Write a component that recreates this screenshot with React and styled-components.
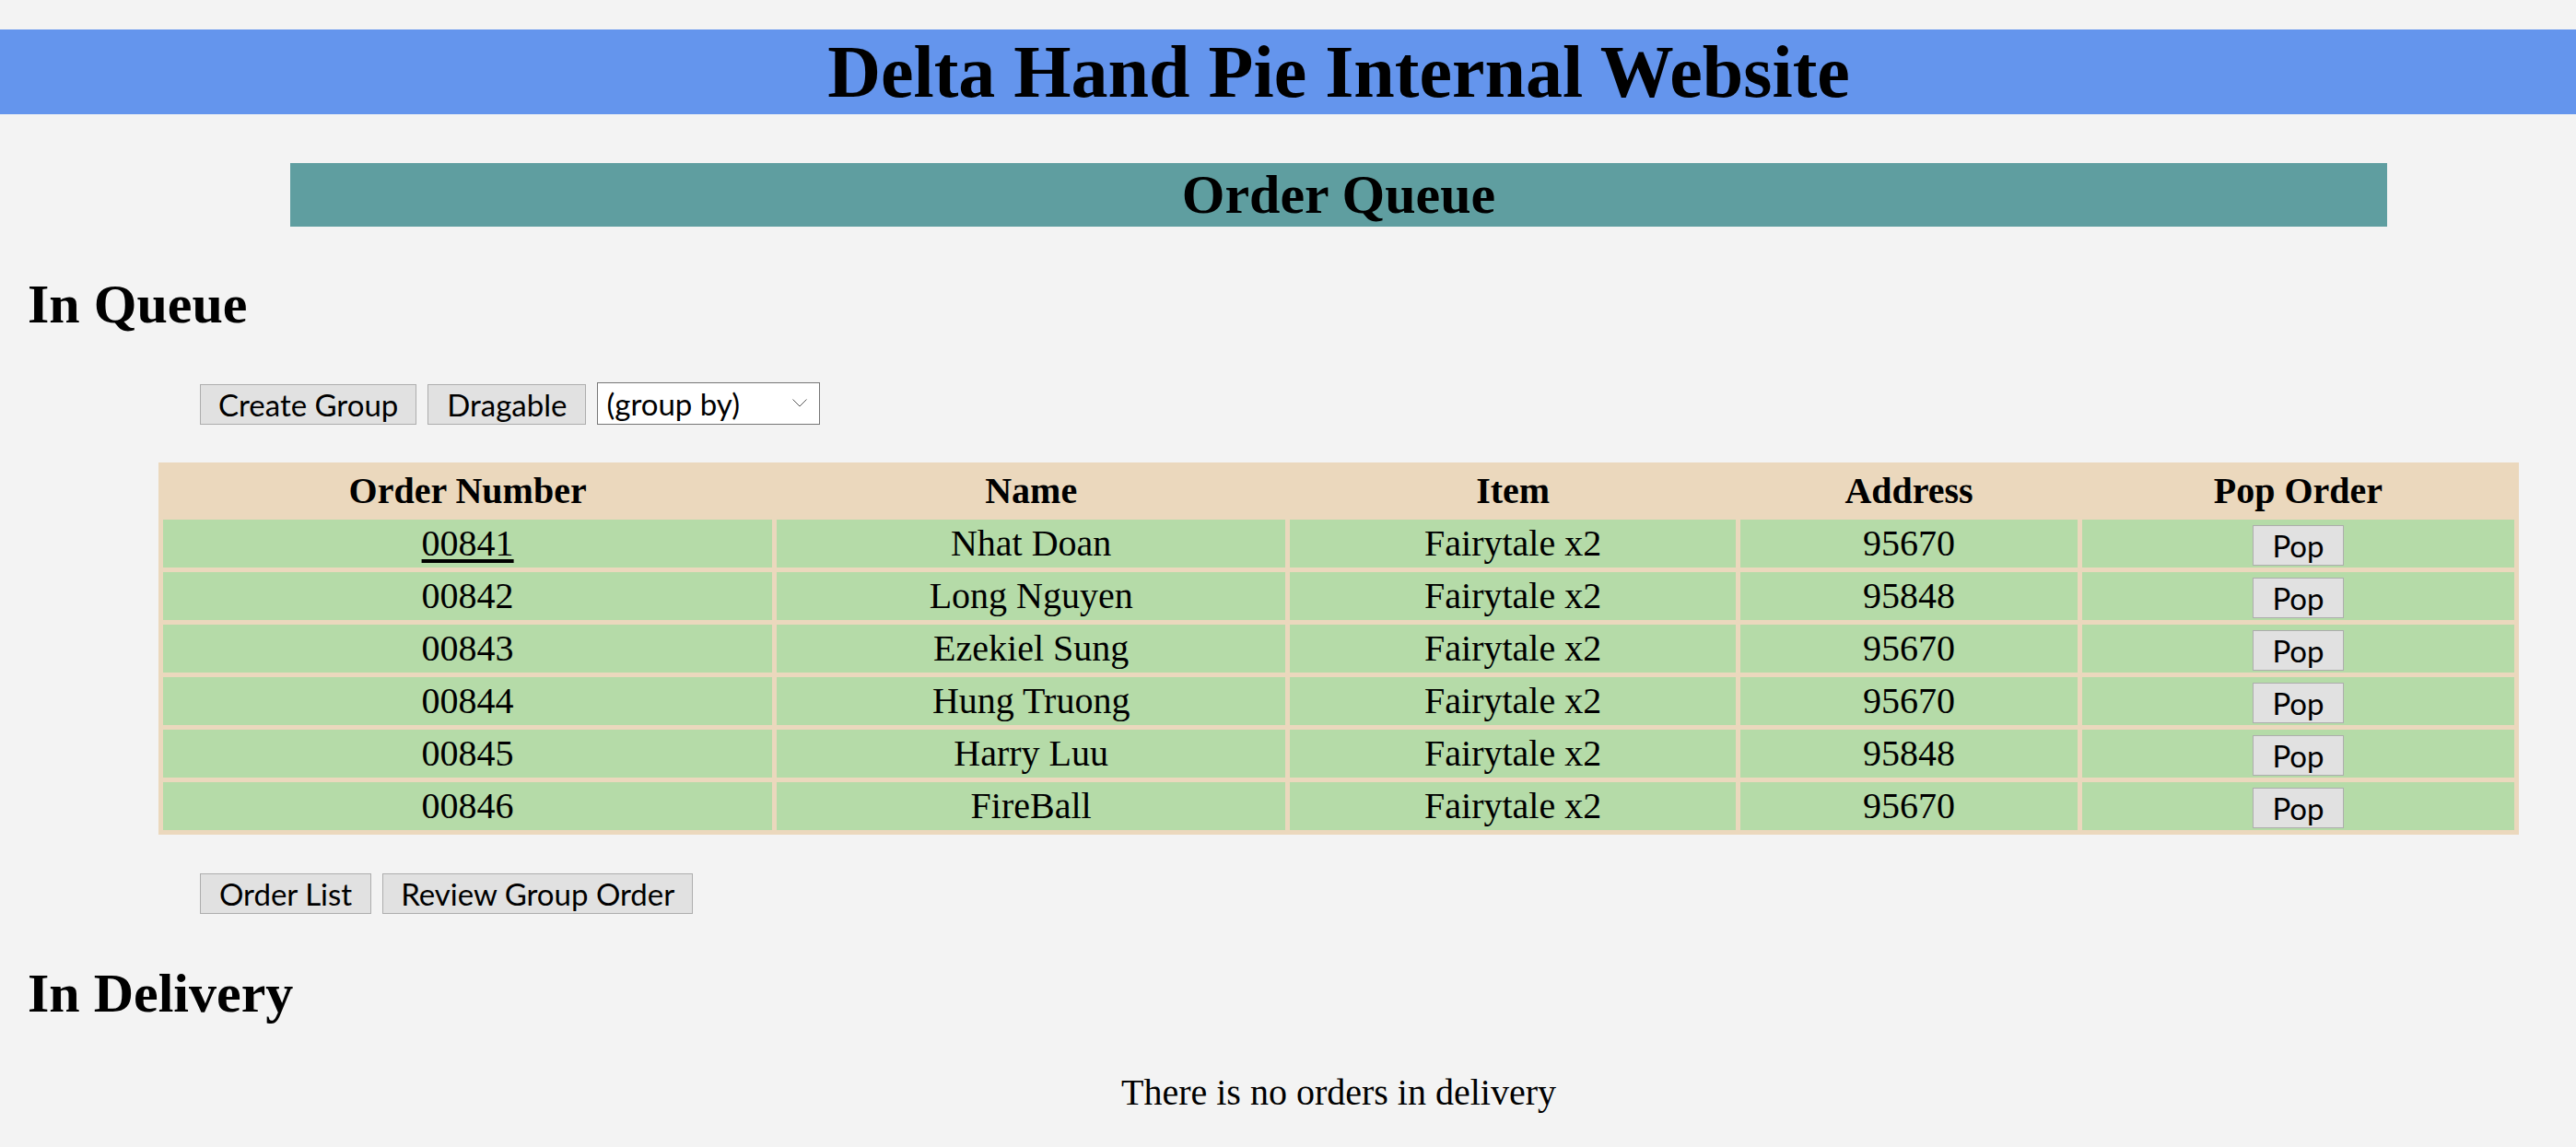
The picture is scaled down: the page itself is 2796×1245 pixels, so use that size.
import React from "react";
import styled, { createGlobalStyle } from "styled-components";

const Global = createGlobalStyle`
  html { overflow: hidden; }
  body {
    margin: 0;
    background: #f3f3f3;
    font-family: "Liberation Serif", "Times New Roman", serif;
    color: #000;
  }
`;

const Page = styled.div`
  width: 2906px;
  padding-top: 32px;
  padding-bottom: 40px;
`;

const SiteHeader = styled.h1`
  margin: 0;
  background: #6495ed;
  font-size: 80px;
  line-height: 92px;
  font-weight: bold;
  text-align: center;
`;

const Content = styled.main`
  padding: 0 30px;
`;

const Banner = styled.h2`
  width: 80%;
  margin: 53px auto 0;
  background: #5f9ea0;
  font-size: 60px;
  line-height: 69px;
  font-weight: bold;
  text-align: center;
`;

const SectionTitle = styled.h2`
  margin: ${(p) => p.$top}px 0 0;
  font-size: 60px;
  line-height: 69px;
  font-weight: bold;
`;

const Toolbar = styled.div`
  display: flex;
  align-items: flex-end;
  gap: 12px;
  margin-top: ${(p) => p.$top}px;
  padding-left: 187px;
`;

const Button = styled.button`
  height: 44px;
  padding: 0 ${(p) => p.$pad || 20}px;
  border: 1px solid #adadad;
  background: #e1e1e1;
  font-family: Lato, "Noto Sans", sans-serif;
  font-size: 33px;
  color: #000;
  line-height: 1;
  cursor: pointer;
`;

const SelectWrap = styled.div`
  position: relative;
  width: 242px;
  height: 46px;
`;

const Select = styled.select`
  appearance: none;
  -webkit-appearance: none;
  width: 100%;
  height: 100%;
  padding: 0 0 0 9px;
  border: 1px solid #767676;
  background: #fff;
  font-family: Lato, "Noto Sans", sans-serif;
  font-size: 33px;
  color: #000;
`;

const Chevron = styled.svg`
  position: absolute;
  right: 14px;
  top: 18px;
  width: 16px;
  height: 9px;
  pointer-events: none;
`;

const Table = styled.table`
  width: 90%;
  margin: 41px auto 0;
  background: #ebd8bd;
  border-spacing: 5px;
  table-layout: fixed;
`;

const Col = styled.col`
  width: ${(p) => p.$w}px;
`;

const Th = styled.th`
  height: 52px;
  padding: 0;
  font-size: 40px;
  line-height: 46px;
  font-weight: bold;
  text-align: center;
`;

const Td = styled.td`
  height: 52px;
  padding: 0;
  background: #b5dba8;
  font-size: 40px;
  line-height: 46px;
  text-align: center;
  vertical-align: middle;
`;

const OrderLink = styled.a`
  color: #000;
  text-decoration: underline;
  text-underline-offset: 4px;
`;

const PopButton = styled(Button)`
  vertical-align: middle;
`;

const Empty = styled.p`
  margin: 50px 0 0;
  font-size: 40px;
  line-height: 46px;
  text-align: center;
`;

const orders = [
  { id: "00841", name: "Nhat Doan", item: "Fairytale x2", addr: "95670", link: true },
  { id: "00842", name: "Long Nguyen", item: "Fairytale x2", addr: "95848" },
  { id: "00843", name: "Ezekiel Sung", item: "Fairytale x2", addr: "95670" },
  { id: "00844", name: "Hung Truong", item: "Fairytale x2", addr: "95670" },
  { id: "00845", name: "Harry Luu", item: "Fairytale x2", addr: "95848" },
  { id: "00846", name: "FireBall", item: "Fairytale x2", addr: "95670" },
];

export default function App() {
  return (
    <Page>
      <Global />
      <SiteHeader>Delta Hand Pie Internal Website</SiteHeader>
      <Content>
        <Banner>Order Queue</Banner>
        <SectionTitle $top={50}>In Queue</SectionTitle>
        <Toolbar $top={50}>
          <Button $pad={19}>Create Group</Button>
          <Button $pad={20}>Dragable</Button>
          <SelectWrap>
            <Select defaultValue="">
              <option value="">(group by)</option>
              <option value="address">Address</option>
              <option value="item">Item</option>
            </Select>
            <Chevron viewBox="0 0 16 9">
              <polyline points="0.5,0.5 8,8 15.5,0.5" fill="none" stroke="#555" strokeWidth="1" />
            </Chevron>
          </SelectWrap>
        </Toolbar>
        <Table>
          <colgroup>
            <Col $w={660} />
            <Col $w={552} />
            <Col $w={483} />
            <Col $w={366} />
            <Col $w={468} />
          </colgroup>
          <thead>
            <tr>
              <Th>Order Number</Th>
              <Th>Name</Th>
              <Th>Item</Th>
              <Th>Address</Th>
              <Th>Pop Order</Th>
            </tr>
          </thead>
          <tbody>
            {orders.map((o) => (
              <tr key={o.id}>
                <Td>{o.link ? <OrderLink href="#">{o.id}</OrderLink> : o.id}</Td>
                <Td>{o.name}</Td>
                <Td>{o.item}</Td>
                <Td>{o.addr}</Td>
                <Td>
                  <PopButton $pad={20}>Pop</PopButton>
                </Td>
              </tr>
            ))}
          </tbody>
        </Table>
        <Toolbar $top={42}>
          <Button $pad={20}>Order List</Button>
          <Button $pad={19}>Review Group Order</Button>
        </Toolbar>
        <SectionTitle $top={52}>In Delivery</SectionTitle>
        <Empty>There is no orders in delivery</Empty>
      </Content>
    </Page>
  );
}
